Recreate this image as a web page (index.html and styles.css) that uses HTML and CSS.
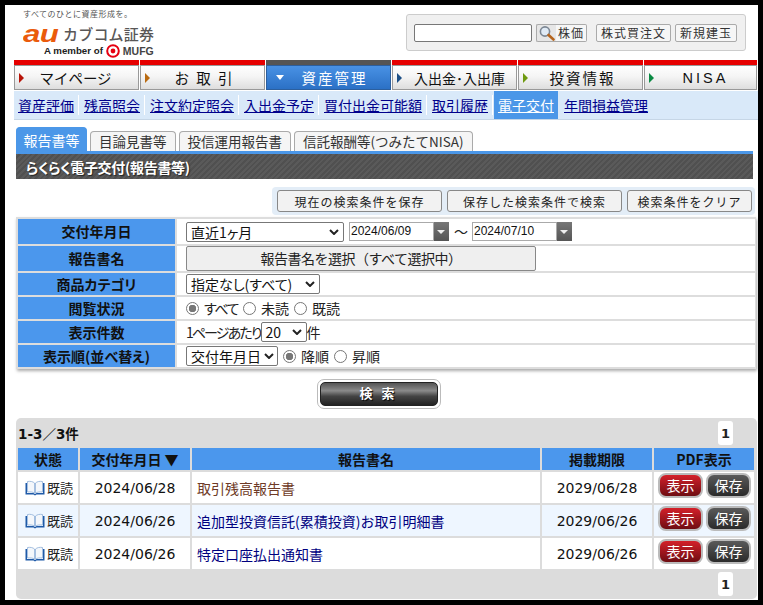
FILE: index.html
```html
<!DOCTYPE html>
<html lang="ja">
<head>
<meta charset="utf-8">
<title>らくらく電子交付</title>
<link rel="stylesheet" href="styles.css">
</head>
<body>
<div class="frame">
  <header class="top">
    <div class="brand">
      <div class="tagline">すべてのひとに資産形成を。</div>
      <div class="logo"><span class="au">au</span><span class="kabu">カブコム証券</span></div>
      <div class="member">A member of
        <svg class="mufg" width="16" height="14" viewBox="0 0 16 14"><circle cx="8" cy="7" r="5.8" fill="none" stroke="#e60012" stroke-width="2"/><circle cx="8" cy="7" r="2.4" fill="#e60012"/></svg>
        <b>MUFG</b></div>
    </div>
    <div class="quote">
      <input class="code" type="text">
      <span class="btn-mag"><svg width="18" height="16" viewBox="0 0 18 16"><circle cx="7" cy="6.5" r="4.6" fill="#dfeaf5" stroke="#7c8794" stroke-width="1.6"/><path d="M10.5 10l5 4.5" stroke="#b5651d" stroke-width="2.6" stroke-linecap="round"/></svg></span><span class="qbtn qb1">株価</span>
      <span class="qbtn qb2">株式買注文</span>
      <span class="qbtn qb3">新規建玉</span>
    </div>
  </header>

  <nav class="gnav">
    <a class="gi"><i class="tri red"></i><span class="gt">マイページ</span></a>
    <a class="gi"><i class="tri orange"></i><span class="gt wide">お 取 引</span></a>
    <a class="gi on"><i class="tri-down"></i><span class="gt wide">資産管理</span></a>
    <a class="gi"><i class="tri navy"></i><span class="gt tight">入出金･入出庫</span></a>
    <a class="gi"><i class="tri olive"></i><span class="gt wide">投資情報</span></a>
    <a class="gi last"><i class="tri green"></i><span class="gt nisa">NISA</span></a>
  </nav>

  <div class="subnav">
    <a>資産評価</a><a>残高照会</a><a>注文約定照会</a><a>入出金予定</a><a>買付出金可能額</a><a>取引履歴</a><a class="cur">電子交付</a><a class="end">年間損益管理</a>
  </div>

  <div class="tabs">
    <span class="tab act">報告書等</span>
    <span class="tab">目論見書等</span>
    <span class="tab">投信運用報告書</span>
    <span class="tab">信託報酬等(つみたてNISA)</span>
  </div>
  <h1 class="title">らくらく電子交付(報告書等)</h1>

  <div class="saved">
    <span class="sbtn s1">現在の検索条件を保存</span>
    <span class="sbtn s2">保存した検索条件で検索</span>
    <span class="sbtn s3">検索条件をクリア</span>
  </div>

  <div class="form">
    <div class="fh h25">交付年月日</div>
    <div class="fc h25">
      <span class="sel period">直近1ヶ月<svg class="chev" width="10" height="6" viewBox="0 0 10 6"><path d="M1 1l4 4 4-4" fill="none" stroke="#222" stroke-width="2"/></svg></span>
      <span class="datebox">2024/06/09</span><span class="cal"></span>
      <span class="tilde">～</span>
      <span class="datebox">2024/07/10</span><span class="cal"></span>
    </div>
    <div class="fh h25">報告書名</div>
    <div class="fc h25"><span class="pick">報告書名を選択（すべて選択中）</span></div>
    <div class="fh">商品カテゴリ</div>
    <div class="fc"><span class="sel cat">指定なし(すべて)<svg class="chev" width="10" height="6" viewBox="0 0 10 6"><path d="M1 1l4 4 4-4" fill="none" stroke="#222" stroke-width="2"/></svg></span></div>
    <div class="fh">閲覧状況</div>
    <div class="fc"><i class="radio first sel-r"></i><span class="kn">すべて</span><i class="radio"></i>未読<i class="radio"></i>既読</div>
    <div class="fh">表示件数</div>
    <div class="fc"><span class="kn2">1ページあたり</span><span class="sel num">20<svg class="chev" width="10" height="6" viewBox="0 0 10 6"><path d="M1 1l4 4 4-4" fill="none" stroke="#222" stroke-width="2"/></svg></span>件</div>
    <div class="fh">表示順(並べ替え)</div>
    <div class="fc"><span class="sel order">交付年月日<svg class="chev" width="10" height="6" viewBox="0 0 10 6"><path d="M1 1l4 4 4-4" fill="none" stroke="#222" stroke-width="2"/></svg></span><i class="radio sel-r"></i>降順<i class="radio"></i>昇順</div>
  </div>

  <div class="searchwrap"><span class="search">検 索</span></div>

  <section class="result">
    <div class="rbar"><b>1-3／3件</b><span class="page">1</span></div>
    <div class="grid">
      <div class="th">状態</div><div class="th">交付年月日 ▼</div><div class="th">報告書名</div><div class="th">掲載期限</div><div class="th">PDF表示</div>

      <div class="td st"><svg class="book" width="20" height="16" viewBox="0 0 20 16"><use href="#bk"/></svg>既読</div>
      <div class="td date">2024/06/28</div>
      <div class="td name visited">取引残高報告書</div>
      <div class="td date">2029/06/28</div>
      <div class="td pdf"><span class="pb red-b">表示</span><span class="pb dark-b">保存</span></div>

      <div class="td st alt"><svg class="book" width="20" height="16" viewBox="0 0 20 16"><use href="#bk"/></svg>既読</div>
      <div class="td date alt">2024/06/26</div>
      <div class="td name alt">追加型投資信託(累積投資)お取引明細書</div>
      <div class="td date alt">2029/06/26</div>
      <div class="td pdf alt"><span class="pb red-b">表示</span><span class="pb dark-b">保存</span></div>

      <div class="td st"><svg class="book" width="20" height="16" viewBox="0 0 20 16"><use href="#bk"/></svg>既読</div>
      <div class="td date">2024/06/26</div>
      <div class="td name">特定口座払出通知書</div>
      <div class="td date">2029/06/26</div>
      <div class="td pdf"><span class="pb red-b">表示</span><span class="pb dark-b">保存</span></div>
    </div>
    <div class="rfoot"><span class="page">1</span></div>
  </section>
</div>
<svg width="0" height="0" class="defs"><defs><g id="bk"><path d="M0.5 3v11.500h8l1.500 1 1.500-1h8V3h-1.500v10h-6.500L10 14l-1.500-1H2V3z" fill="#1f5aa8"/><path d="M2.500 1.500C5 1 8 1.500 9.500 3v10C8 12 5 11.700 2.500 12zM17.500 1.500C15 1 12 1.500 10.500 3v10c1.500-1 4.500-1.300 7-1z" fill="#f4f7fb" stroke="#8fb0d8" stroke-width=".8"/></g></defs></svg>
</body>
</html>
```
FILE: styles.css
```css
* { box-sizing: border-box; }
html, body { margin: 0; padding: 0; background: #000; }
body { font-family: "Noto Sans CJK JP", "Liberation Sans", sans-serif; color: #111; font-size: 14px; }
.frame { margin: 5px 0 0 5px; width: 753px; height: 595px; background: #fff; overflow: hidden; }

.top { display: flex; justify-content: space-between; height: 55px; }
.brand { padding: 3px 0 0 18px; width: 200px; }
.tagline { font-size: 8px; line-height: 12px; color: #555; letter-spacing: .5px; }
.logo { display: flex; align-items: center; height: 23px; margin-top: 2px; white-space: nowrap; }
.au { font: italic 700 24px/23px "Liberation Sans", sans-serif; color: #ea5b0c; width: 40px; transform: scaleX(1.3); transform-origin: left; letter-spacing: -.5px; }
.kabu { font-size: 15px; line-height: 23px; font-weight: 500; color: #595757; letter-spacing: .2px; }
.member { display: flex; align-items: center; gap: 1px; padding-left: 21px; margin-top: -1px; font: 700 9.700px/14px "Liberation Sans", sans-serif; color: #222; white-space: nowrap; }
.member b { color: #444; font-size: 10.500px; }
.mufg { margin-left: 1px; margin-right: 1px; }

.quote { display: flex; align-items: center; width: 340px; height: 37px; margin: 9px 12px 0 0; padding: 0 0 0 7px; background: #f0f0f0; border: 1px solid #ccc; border-radius: 3px; }
.code { width: 118px; height: 18px; border: 1px solid #777; border-radius: 2px; background: #fff; padding: 0; margin: 0 4px 0 0; }
.btn-mag { display: flex; align-items: center; justify-content: center; width: 20px; height: 18px; background: #e6e6e6; border: 1px solid #aaa; border-right: 0; border-radius: 2px 0 0 2px; }
.qbtn { display: block; height: 18px; font-size: 12px; line-height: 16px; text-align: center; letter-spacing: 1px; background: #f6f6f6; border: 1px solid #aaa; border-radius: 2px; color: #333; white-space: nowrap; }
.qb1 { width: 31px; border-left: 0; border-radius: 0 2px 2px 0; }
.qb2 { width: 75px; margin-left: 9px; }
.qb3 { width: 62px; margin-left: 4px; }

.gnav { display: flex; gap: 1px; padding-left: 9px; height: 30px; }
.gi { display: flex; align-items: center; width: 125px; height: 30px; border-top: 5px solid #e60000; background: linear-gradient(#fff 0, #f5f5f5 45%, #dcdcdc 100%); box-shadow: inset 0 0 0 1px #999; color: #111; font-size: 14.500px; }
.gi.last { width: 113px; }
.gi.on { border-top-color: #555; background: linear-gradient(#4a93e6, #2a6fc4); box-shadow: inset 0 0 0 1px #2c5f9e; color: #fff; }
.gt { flex: 1; text-align: center; padding-right: 12px; white-space: nowrap; }
.gt.wide { letter-spacing: 2px; padding-right: 6px; }
.gt.tight { font-size: 14px; padding-right: 0; }
.gt.nisa { letter-spacing: 3px; padding-right: 0; font-family: "Liberation Sans", sans-serif; }
.tri { width: 0; height: 0; margin-left: 5px; border-left: 5px solid; border-top: 5px solid transparent; border-bottom: 5px solid transparent; flex: none; }
.tri.red { border-left-color: #b81408; }
.tri.orange { border-left-color: #b96a10; }
.tri.navy { border-left-color: #1c4f86; }
.tri.olive { border-left-color: #6f9a10; }
.tri.green { border-left-color: #0a8a43; }
.tri-down { width: 0; height: 0; margin-left: 10px; border-top: 5px solid #fff; border-left: 4px solid transparent; border-right: 4px solid transparent; flex: none; }

.subnav { display: flex; align-items: center; margin: 1px 0 0 9px; padding-left: 4px; height: 29px; background: #d9e9f9; border-bottom: 1px solid #c6d6e6; font-size: 14px; }
.subnav a { color: #00008b; text-decoration: underline; margin-right: 5px; padding-right: 4px; white-space: nowrap; border-right: 1px solid #fff; line-height: 20px; }
.subnav a.cur { background: #4b97e8; color: #fff; height: 28px; line-height: 28px; padding: 0 4px; margin: 0 6px 0 -4px; border: 0; }
.subnav a.end { border: 0; }

.tabs { display: flex; gap: 3px; margin: 7px 0 0 11px; height: 24px; align-items: flex-end; }
.tab { height: 20px; padding: 0 8px; border: 1px solid #aaa; border-bottom: 0; border-radius: 4px 4px 0 0; background: #f5f5f5; font-size: 13.500px; line-height: 19px; color: #333; white-space: nowrap; }
.tab.act { height: 24px; line-height: 24px; padding: 0 6.500px; border-color: #4b97e8; background: #4b97e8; color: #fff; font-size: 14px; }
.title { margin: 0 0 0 11px; width: 737px; height: 28px; border-top: 3px solid #4b97e8; background: repeating-linear-gradient(135deg, #5a5a5a 0 2px, #505050 2px 4px); color: #fff; font-size: 14px; font-weight: 700; font-feature-settings: "palt"; letter-spacing: -.3px; line-height: 26px; padding-left: 10px; text-shadow: 1px 1px 1px #222; }

.saved { display: flex; justify-content: flex-end; gap: 5px; margin: 8px 3px 0 auto; width: 483px; height: 28px; padding: 3px; background: #e3edf7; border-radius: 4px; }
.sbtn { display: block; height: 22px; font-size: 12px; line-height: 21px; text-align: center; letter-spacing: 1px; background: #f2f2f2; border: 1px solid #888; border-radius: 3px; color: #222; white-space: nowrap; }
.s1 { width: 165px; }
.s2 { width: 175px; }
.s3 { width: 125px; }

.form { display: grid; grid-template-columns: 157px 578px; gap: 2px; margin: 2px 0 0 11px; width: 740px; padding: 2px; background: #ddd; box-shadow: 1px 2px 3px #aaa; }
.fh { height: 22px; background: #4b97ed; text-align: center; font-weight: 700; font-size: 14px; font-feature-settings: "palt"; line-height: 22px; color: #111; }
.fc { height: 22px; background: #fff; display: flex; align-items: center; padding-left: 9px; font-size: 14px; font-feature-settings: "palt"; white-space: nowrap; color: #222; }
.h25 { height: 25px; line-height: 25px; }
.kn { letter-spacing: -1.400px; }
.kn2 { letter-spacing: -1.900px; }
.sel { display: flex; align-items: center; justify-content: space-between; height: 20px; padding: 0 4px; font-size: 14px; line-height: 18px; color: #111; background: #fff; border: 1px solid #777; border-radius: 2px; }
.chev { flex: none; }
.period { width: 158px; }
.datebox { display: block; width: 85px; height: 19px; margin-left: 5px; border: 1px solid #aaa; font: 12px/17px "Liberation Sans", sans-serif; color: #111; padding-left: 1px; }
.cal { position: relative; display: block; width: 15px; height: 19px; background: linear-gradient(#777, #555); }
.cal::after { content: ""; position: absolute; left: 3px; top: 8px; border-top: 4px solid #eee; border-left: 4px solid transparent; border-right: 4px solid transparent; }
.tilde { margin: 0 -1px 0 5px; }
.pick { display: block; width: 350px; height: 25px; background: #efefef; border: 1px solid #888; border-radius: 2px; text-align: center; font-size: 14px; font-feature-settings: normal; letter-spacing: -.5px; line-height: 22px; color: #222; }
.cat { width: 134px; }
.num { width: 46px; }
.order { width: 92px; padding-right: 3px; }
.radio { display: block; width: 13px; height: 13px; margin: 0 5px; border: 1px solid #777; border-radius: 50%; background: #fff; flex: none; }
.radio.first { margin-left: 0; }
.radio.sel-r { background: radial-gradient(circle, #777 0 3.500px, #fff 4px); }

.searchwrap { display: flex; justify-content: center; margin-top: 10px; height: 30px; padding-right: 6px; }
.search { display: block; position: relative; z-index: 0; width: 124px; height: 30px; border: 1px solid #bbb; border-radius: 7px; background: #fff; color: #fff; font-size: 13px; font-weight: 700; letter-spacing: 3px; text-align: center; line-height: 26px; text-shadow: 1px 1px 1px #000; }
.search::before { content: ""; position: absolute; inset: 2px; z-index: -1; border-radius: 5px; border: 1px solid #222; background: linear-gradient(#555 0, #8a8a8a 35%, #444 60%, #222 100%); }

.result { margin: 9px 0 0 11px; width: 741px; height: 181px; background: #dcdcdc; border-radius: 5px; }
.rbar { display: flex; justify-content: space-between; align-items: center; height: 30px; padding: 0 24px 0 2px; font-size: 14px; }
.rbar b { font-family: "DejaVu Sans", "Noto Sans CJK JP", sans-serif; font-size: 13.500px; }
.page { display: block; width: 15px; height: 24px; background: #fff; border-radius: 3px; text-align: center; font: 700 13px/25px "DejaVu Sans", sans-serif; color: #222; }
.grid { display: grid; grid-template-columns: 60px 110px 348px 110px 100px; grid-template-rows: 22px 31px 31px 31px; gap: 2px; margin-left: 2px; }
.th { background: #4b97ed; text-align: center; font-weight: 700; font-size: 14px; line-height: 22px; color: #111; }
.td { background: #fff; display: flex; align-items: center; font-size: 14px; color: #222; white-space: nowrap; }
.alt { background: #eef6ff; }
.st { padding-left: 7px; font-size: 13px; }
.book { margin-right: 2px; flex: none; }
.date { justify-content: center; font-family: "DejaVu Sans", sans-serif; font-size: 14px; color: #111; }
.name { padding-left: 5px; color: #00007f; }
.name.visited { color: #6e3a26; }
.pdf { gap: 3px; padding: 0 0 5px 4px; }
.pb { display: block; width: 45px; height: 25px; border-radius: 8px; border: 2px solid #bbb; color: #fff; font-size: 14px; text-align: center; line-height: 20px; }
.red-b { background: linear-gradient(#d4202a, #6e0d12); }
.dark-b { background: linear-gradient(#5a5a5a, #2a2a2a); }
.rfoot { display: flex; justify-content: flex-end; padding: 3px 24px 0 0; }
.defs { position: absolute; }
```
